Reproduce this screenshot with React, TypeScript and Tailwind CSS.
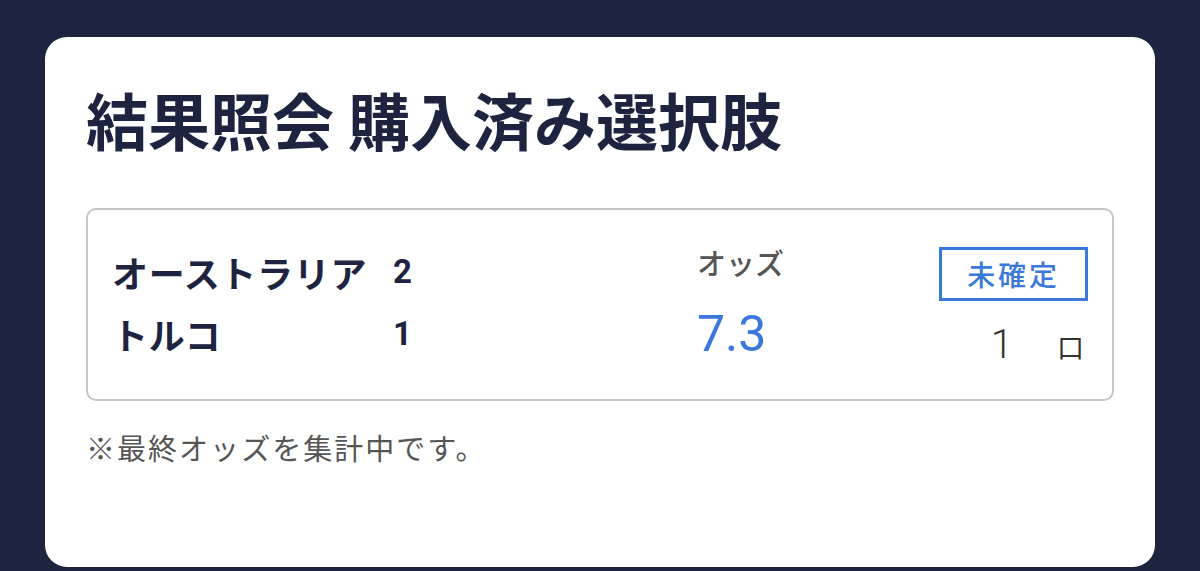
const jp = "font-['Noto_Sans_CJK_JP','Noto_Sans',sans-serif]";
const num = "font-['Roboto','Noto_Sans_CJK_JP',sans-serif]";

const bets = [
  { team: "オーストラリア", score: "2" },
  { team: "トルコ", score: "1" },
];

export default function App() {
  return (
    <div className={`min-h-screen bg-[#1e2440] px-[45px] pt-[37px] ${jp}`}>
      <div className="h-[530px] rounded-[22px] bg-white px-[41px] pt-[51px]">
        <h1 className="text-[62px] font-bold leading-none text-[#1e2440]">結果照会 購入済み選択肢</h1>

        <div className="mt-[58px] flex h-[193px] items-start rounded-[10px] border-2 border-[#c6c6c6] px-[24px]">
          <div className="grid w-[585px] grid-cols-[281px_auto] gap-y-[24px] pt-[43px] text-[#1e2440]">
            {bets.map((b) => (
              <div key={b.team} className="contents">
                <span className="text-[36px] font-bold leading-[38px] tracking-[0.02em]">{b.team}</span>
                <span className={`${num} text-[33px] font-bold leading-[38px]`}>{b.score}</span>
              </div>
            ))}
          </div>

          <div className="flex w-[240px] flex-col items-start pt-[33px]">
            <span className="text-[29px] font-medium leading-[38px] text-[#555]">オッズ</span>
            <span className={`${num} mt-[28px] text-[50px] leading-[50px] text-[#3b78db]`}>7.3</span>
          </div>

          <div className="ml-auto flex flex-col items-end pt-[37px]">
            <span className="flex h-[54px] w-[149px] items-center justify-center border-[3px] border-[#3b78db] text-[28px] font-medium tracking-[0.1em] text-[#3b78db]">
              未確定
            </span>
            <div className="mt-[24px] flex items-baseline pr-[4px] leading-[40px]">
              <span className={`${num} text-[40px] font-light text-[#333]`}>1</span>
              <span className="ml-[44px] text-[27px] text-[#333]">口</span>
            </div>
          </div>
        </div>

        <p className="mt-[26px] text-[29px] leading-[40px] tracking-[0.07em] text-[#555]">※最終オッズを集計中です。</p>
      </div>
    </div>
  );
}
